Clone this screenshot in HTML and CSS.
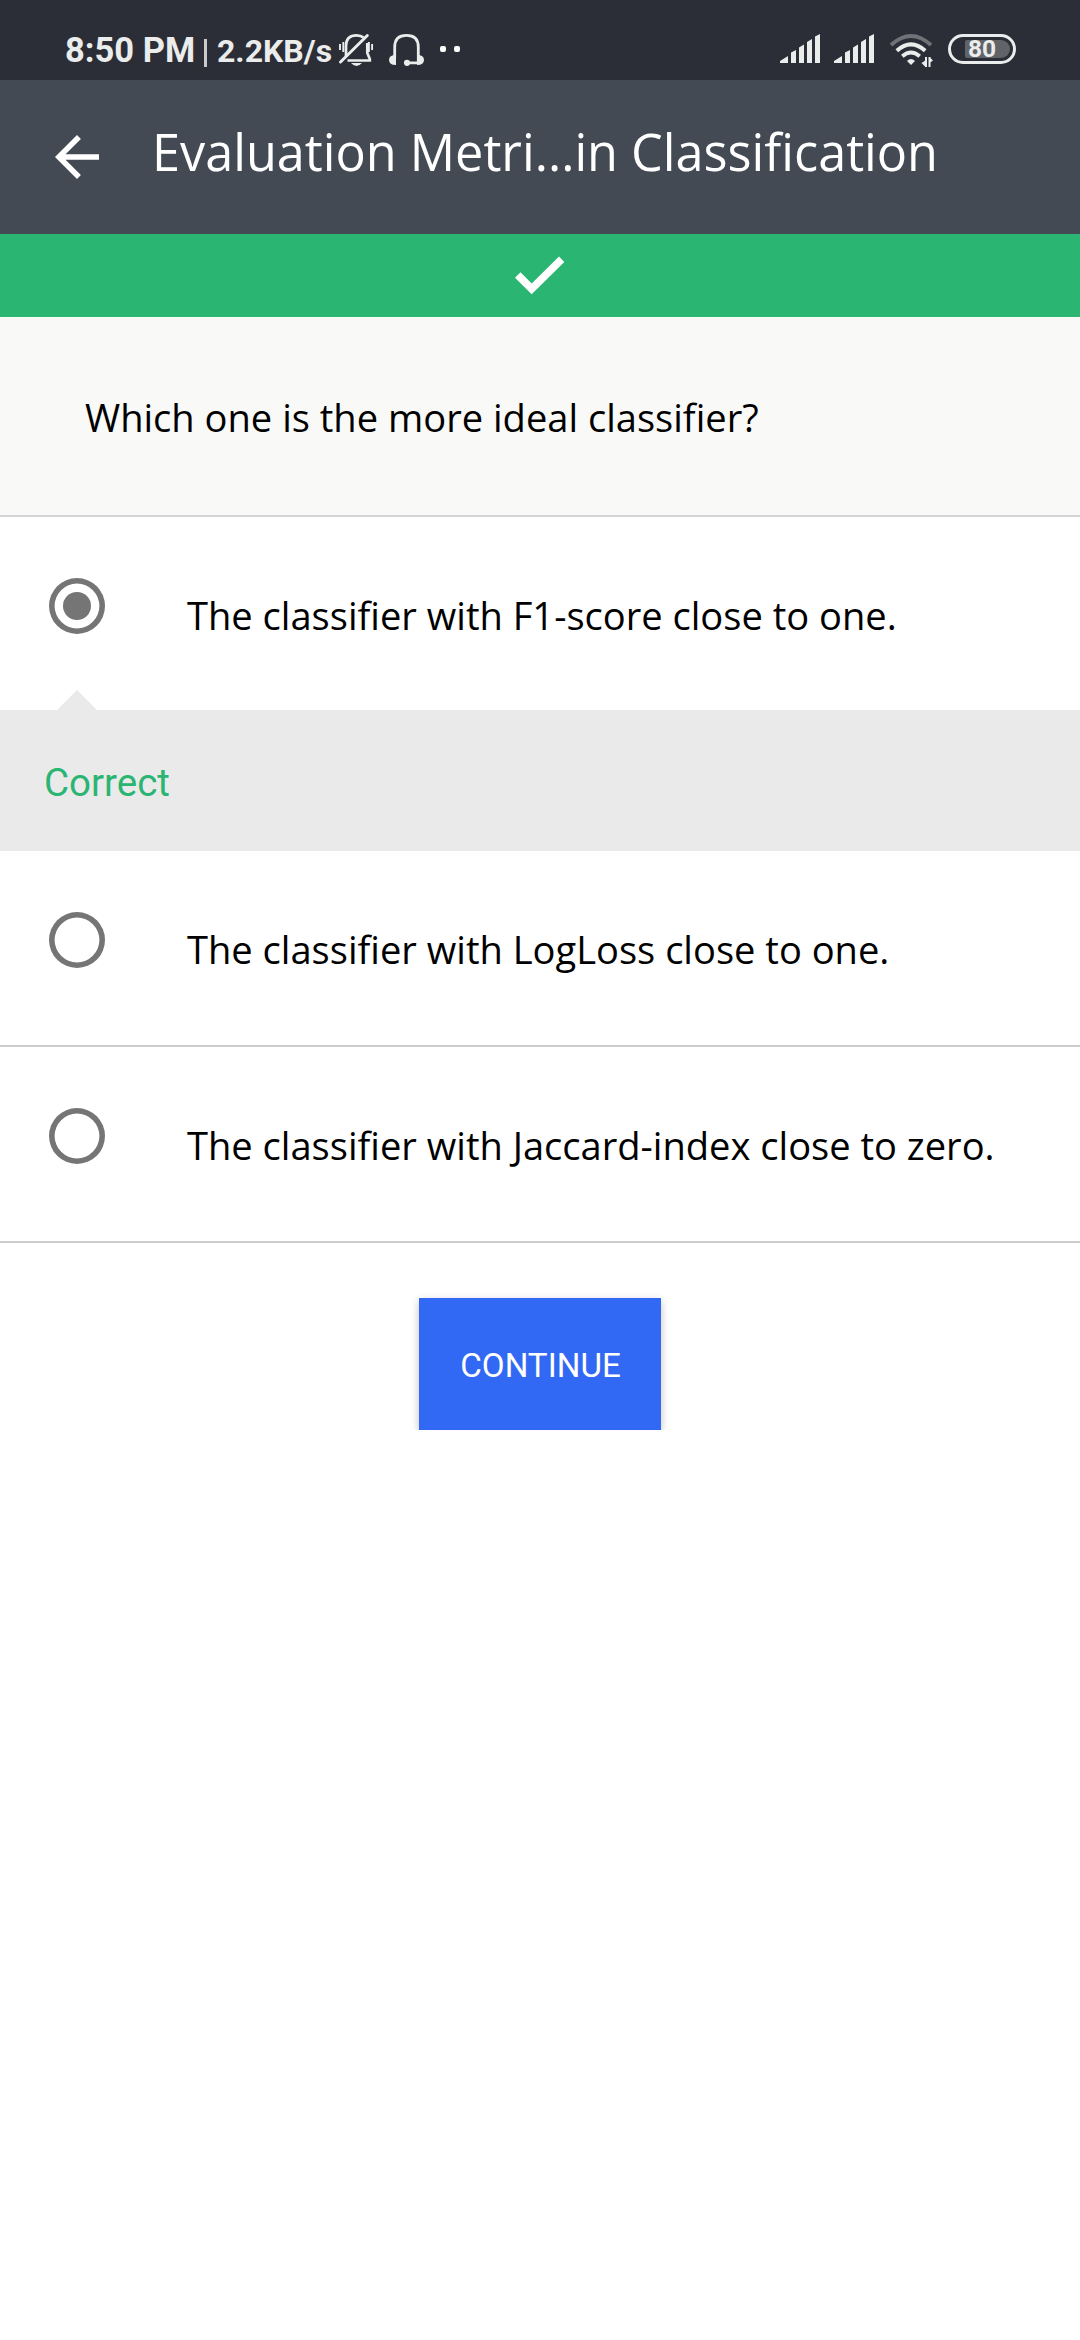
FILE: index.html
```html
<!DOCTYPE html>
<html lang="en">
<head>
<meta charset="utf-8">
<title>Evaluation Metrics in Classification</title>
<link rel="stylesheet" href="styles.css">
</head>
<body>
<div class="status">
  <span class="clock">8:50 PM</span>
  <span class="divider"></span>
  <span class="speed">2.2KB/s</span>
  <svg class="bell" viewBox="338 33 36 34" width="36" height="34" fill="none" stroke="#ebecec" stroke-width="2.7">
    <path d="M346 56V46Q346 35.300 356.500 35.300Q361 35.300 363.500 37.500M367.300 43V53L369.800 59V60.500H347.500"/>
    <path d="M340.500 62L367.300 35.500" stroke-width="3" stroke-linecap="round"/>
    <path d="M340 44V50M343.300 42V52M368.900 42V52M372.100 44V50" stroke-width="1.900"/>
    <path d="M351 63H362Q356.500 69 351 63Z" fill="#ebecec" stroke="none"/>
  </svg>
  <svg class="phones" viewBox="388 33 37 34" width="37" height="34" fill="none" stroke="#ebecec" stroke-width="2.800">
    <path d="M394.700 58V47Q394.700 35.300 406.500 35.300Q418.300 35.300 418.300 47V62.800H407"/>
    <path d="M396 65Q389 65 389 60Q389 55 396 55ZM417 55Q424 55 424 60Q424 65 417 65Z" fill="#ebecec" stroke="none"/>
    <circle cx="407" cy="62.800" r="3.100" fill="#ebecec" stroke="none"/>
  </svg>
  <span class="dot"></span><span class="dot"></span>
  <svg class="signal first" viewBox="0 0 40 29" width="40" height="29" fill="#ebecec"><path d="M0 29V27L8 22V29ZM11 29V18.500L16 16V29ZM19 29V13.500L24 10.500V29ZM27 29V8L32 5V29ZM35 29V2.500L40 0V29Z"/></svg>
  <svg class="signal" viewBox="0 0 40 29" width="40" height="29" fill="#ebecec"><path d="M0 29V27L8 22V29ZM11 29V18.500L16 16V29ZM19 29V13.500L24 10.500V29ZM27 29V8L32 5V29ZM35 29V2.500L40 0V29Z"/></svg>
  <svg class="wifi" viewBox="889 33 45 35" width="45" height="35" fill="none" stroke="#ebecec" stroke-width="3.900">
    <path d="M891 45Q911 27 931 45" stroke="#6f7276"/>
    <path d="M896.800 50.800Q911 38 925.200 50.800M902.300 56.300Q911 48.800 919.700 56.300"/>
    <path d="M907 61Q911 57 915 61L911 65Z" fill="#ebecec" stroke="none"/>
    <path d="M926 57V67M929.500 57V67" stroke-width="2"/>
    <path d="M921.500 63L926 60V66.500L925 66.500ZM933 60.500L929.500 57V63Z" fill="#ebecec" stroke="none"/>
  </svg>
  <span class="battery"><span class="level">80</span></span>
</div>
<header class="appbar">
  <svg class="back" viewBox="0 0 24 24" width="66" height="66" fill="#fff"><path d="M20 11H7.830l5.590-5.590L12 4l-8 8 8 8 1.410-1.410L7.830 13H20z"/></svg>
  <h1 class="title">Evaluation Metri...in Classification</h1>
</header>
<div class="result"><svg viewBox="0 0 66 66" width="66" height="66" fill="#fff"><path d="M8 35.700L13.500 30.300L24.700 41.400L52 14.600L57.300 20L24.700 52.200Z"/></svg></div>
<main>
  <p class="question">Which one is the more ideal classifier?</p>
  <div class="option picked"><span class="radio on"></span><span class="label">The classifier with F1-score close to one.</span></div>
  <div class="feedback">Correct</div>
  <div class="option"><span class="radio"></span><span class="label">The classifier with LogLoss close to one.</span></div>
  <div class="option"><span class="radio"></span><span class="label">The classifier with Jaccard-index close to zero.</span></div>
  <button class="continue">CONTINUE</button>
</main>
</body>
</html>
```
FILE: styles.css
```css
* { box-sizing: border-box; }
body { margin: 0; background: #fff; color: #000; font-family: "Open Sans", sans-serif; font-variant-ligatures: none; }
svg { display: block; flex: none; }

.status { display: flex; align-items: flex-start; height: 80px; padding: 33px 64px 0 65px; background: #2b2e36; color: #ebecec; font-family: Roboto, sans-serif; font-weight: 700; white-space: nowrap; }
.clock { width: 139px; font-size: 34.5px; line-height: 35px; }
.divider { width: 3px; height: 28px; margin: 6px 10px 0 0; background: #c9cacc; }
.speed { width: 121px; font-size: 32px; line-height: 37px; }
.phones { margin-left: 14px; }
.dot { width: 6px; height: 6px; border-radius: 2px; margin: 13px 0 0 8px; background: #fff; }
.phones + .dot { margin-left: 15px; }
.signal { margin: 1px 0 0 14px; }
.signal.first { margin-left: auto; }
.wifi { margin-left: 15px; }
.battery { width: 68px; height: 30px; margin: 1px 0 0 14px; padding: 3px; border: 3px solid #ebecec; border-radius: 15px; }
.level { display: block; width: 45px; height: 18px; margin-left: 11px; padding-left: 3px; border-radius: 2px 9px 9px 2px; background: #606368; font-size: 24.5px; line-height: 18px; }

.appbar { display: flex; height: 154px; padding: 44px 0 0 44px; background: #444a54; color: #fff; }
.title { margin: -2px 0 0 42px; font-size: 50.4px; line-height: 60px; font-weight: 400; white-space: nowrap; }
.result { display: flex; justify-content: center; height: 83px; padding-top: 8px; background: #2bb573; }

.question { height: 200px; margin: 0; padding: 70px 85px 0; border-bottom: 2px solid #d4d4d4; background: #f9f9f7; font-size: 38.1px; line-height: 60px; }
.option { display: flex; height: 196px; padding: 61px 0 0 49px; border-bottom: 2px solid #ccc; }
.option.picked { height: 193px; border-bottom: 0; }
.radio { display: grid; place-items: center; width: 56px; height: 56px; border-radius: 50%; box-shadow: inset 0 0 0 5.6px #757575; }
.radio.on::before { content: ""; width: 28px; height: 28px; border-radius: 50%; background: #757575; }
.label { margin: 7px 0 0 82px; font-size: 38.1px; line-height: 60px; white-space: nowrap; }
.feedback { position: relative; height: 141px; padding: 43px 44px 0; background: #eaeaea; color: #2bb573; font-family: Roboto, sans-serif; font-size: 38.5px; line-height: 60px; }
.feedback::before { content: ""; position: absolute; left: 57px; top: -20px; border: 20px solid transparent; border-top: 0; border-bottom-color: #eaeaea; }
.continue { display: block; width: 242px; height: 132px; margin: 55px auto 0; padding: 4px 0 0 1px; border: 0; background: #3169f5; color: #fff; font: 400 33.2px/60px Roboto, sans-serif; box-shadow: 0 3px 8px rgba(0, 0, 0, .25); }
```
